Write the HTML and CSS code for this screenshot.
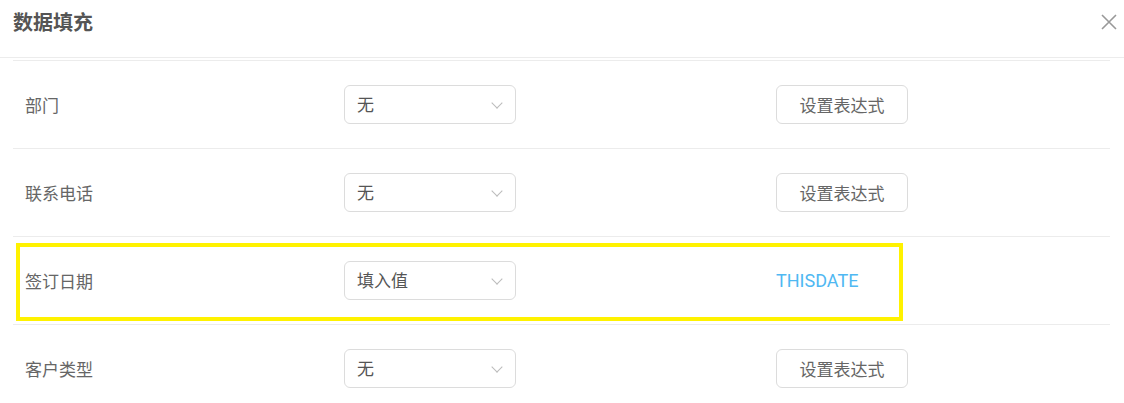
FILE: index.html
```html
<!DOCTYPE html>
<html lang="zh-CN">
<head>
    <meta charset="UTF-8">
    <title>数据填充</title>
    <link rel="stylesheet" href="styles.css">
</head>
<body>
    <header class="dialog-head">
        <h1>数据填充</h1>
        <button class="close" type="button" aria-label="关闭">
            <svg width="16" height="16" viewBox="0 0 16 16"><path d="M1 1L15 15M15 1L1 15" stroke="#999" stroke-width="1.6" fill="none"/></svg>
        </button>
    </header>
    <main class="fill-list">
        <div class="row">
            <span class="label">部门</span>
            <div class="select">无<i class="chev"></i></div>
            <div><button class="expr" type="button">设置表达式</button></div>
        </div>
        <div class="row">
            <span class="label">联系电话</span>
            <div class="select">无<i class="chev"></i></div>
            <div><button class="expr" type="button">设置表达式</button></div>
        </div>
        <div class="row marked">
            <span class="label">签订日期</span>
            <div class="select">填入值<i class="chev"></i></div>
            <div class="value">THISDATE</div>
            <div class="highlight"></div>
        </div>
        <div class="row">
            <span class="label">客户类型</span>
            <div class="select">无<i class="chev"></i></div>
            <div><button class="expr" type="button">设置表达式</button></div>
        </div>
    </main>
</body>
</html>
```

FILE: styles.css
```css
body { margin: 0; background: #fff; font-family: "Noto Sans CJK SC", "Noto Sans", sans-serif; color: #666; overflow: hidden; }
.dialog-head { height: 57px; border-bottom: 1px solid #ececec; display: flex; align-items: center; justify-content: space-between; padding: 0 7px 0 13px; box-sizing: border-box; height: 58px; }
.dialog-head h1 { margin: 0 0 14px; font-size: 20px; font-weight: bold; color: #555; }
.close { background: none; border: none; padding: 0; margin-bottom: 14px; width: 16px; height: 16px; cursor: pointer; }
.close svg { display: block; }
.fill-list { margin: 2px 14px 0 13px; border-top: 1px solid #ececec; }
.row { position: relative; display: grid; grid-template-columns: 319px 432px 1fr; align-items: center; height: 87px; padding-left: 12px; border-bottom: 1px solid #ececec; }
.label { font-size: 17px; color: #666; }
.select { position: relative; width: 172px; height: 39px; box-sizing: border-box; border: 1px solid #dcdcdc; border-radius: 6px; padding-left: 12px; font-size: 17px; line-height: 36px; color: #555; }
.chev { position: absolute; right: 14px; top: 13px; width: 7px; height: 7px; border-right: 1px solid #bbb; border-bottom: 1px solid #bbb; transform: rotate(45deg); }
.expr { width: 132px; height: 39px; background: #fff; border: 1px solid #dcdcdc; border-radius: 6px; font-family: inherit; font-size: 17px; color: #666; padding: 0; }
.value { font-family: Roboto, "Liberation Sans", sans-serif; font-size: 18px; color: #4fb8f2; }
.highlight { position: absolute; left: 3px; top: 6px; width: 887px; height: 78px; box-sizing: border-box; border: 4px solid #fff200; pointer-events: none; }
```
